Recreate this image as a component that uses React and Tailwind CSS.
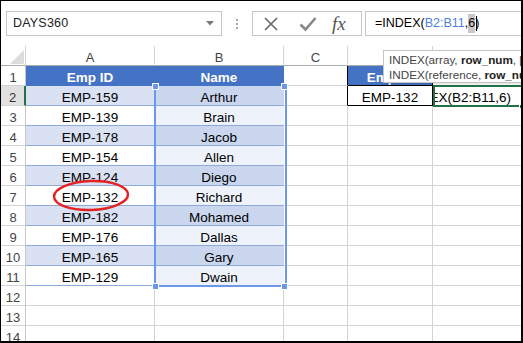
import React from "react";

const ids = ["EMP-159", "EMP-139", "EMP-178", "EMP-154", "EMP-124", "EMP-132", "EMP-182", "EMP-176", "EMP-165", "EMP-129"];
const names = ["Arthur", "Brain", "Jacob", "Allen", "Diego", "Richard", "Mohamed", "Dallas", "Gary", "Dwain"];

const base =
  "h-5 border-r border-b flex items-start justify-center whitespace-nowrap overflow-hidden leading-[23px]";

// per-row cell classes for columns A..E
const rowCells = (r) => {
  const even = r % 2 === 0;
  const data = r >= 2 && r <= 11;
  let a, b;
  if (r === 1) {
    a = "bg-[#4472c4] border-[#4472c4] text-white font-bold";
    b = "bg-[#4472c4] border-[#4472c4] text-white font-bold";
  } else if (data) {
    a = even ? "bg-[#d9e1f2] border-b-[#8ea9db] border-r-[#d9e1f2]" : "bg-white border-b-[#8ea9db] border-r-white";
    b = even ? "bg-[#cad6ee] border-b-[#8ea9db] border-r-[#cad6ee]" : "bg-[#edf2fb] border-b-[#8ea9db] border-r-[#edf2fb]";
  } else {
    a = "bg-white border-[#d4d4d4]";
    b = "bg-white border-[#d4d4d4]";
  }
  const c = r <= 2 ? "bg-white border-r-black border-b-[#d4d4d4]" : "bg-white border-[#d4d4d4]";
  let d = "bg-white border-[#d4d4d4]";
  let e = "bg-white border-[#d4d4d4]";
  if (r === 1) {
    d = "bg-[#4472c4] border-black text-white font-bold";
    e = "bg-white border-r-[#d4d4d4] border-b-black";
  }
  if (r === 2) {
    d = "bg-white border-black";
    e = "bg-white border-black justify-end pr-[10px]";
  }
  return [a, b, c, d, e];
};

const rowText = (r) => {
  if (r === 1) return ["Emp ID", "Name", "", "Emp ID", ""];
  if (r === 2) return [ids[0], names[0], "", "EMP-132", "=INDEX(B2:B11,6)"];
  if (r <= 11) return [ids[r - 2], names[r - 2], "", "", ""];
  return ["", "", "", "", ""];
};

function Handle({ className }) {
  return <div className={`absolute w-[7px] h-[7px] bg-[#6b98ec] border border-white ${className}`} />;
}

export default function App() {
  const rows = Array.from({ length: 14 }, (_, i) => i + 1);

  return (
    <div className="w-[523px] h-[343px] overflow-hidden bg-white border-t border-l border-r-2 border-b-2 border-black font-['Liberation_Sans',Arial,sans-serif] text-black">
      {/* toolbar */}
      <div className="h-[45px] flex items-start pl-[5px] pt-[10px]">
        <div className="w-[216px] h-[25px] border border-[#c6c6c6] flex items-center justify-between pl-[6px] pr-[7px]">
          <span className="text-[12.5px] text-[#222] tracking-[0.2px]">DAYS360</span>
          <svg width="8" height="5" viewBox="0 0 8 5">
            <path d="M0 0 L8 0 L4 4.5 Z" fill="#7a7a7a" />
          </svg>
        </div>
        <div className="w-[30px] h-[25px] flex flex-col items-center justify-center gap-[2px]">
          <div className="w-[2px] h-[2px] bg-[#a8a8a8]" />
          <div className="w-[2px] h-[2px] bg-[#a8a8a8]" />
          <div className="w-[2px] h-[2px] bg-[#a8a8a8]" />
        </div>
        <div className="w-[110px] h-[25px] border border-[#c6c6c6] flex items-center pl-[10px]">
          <svg width="16" height="16" viewBox="0 0 16 16">
            <path d="M2 2 L14 14 M14 2 L2 14" stroke="#666" strokeWidth="1.6" />
          </svg>
          <svg width="18" height="16" viewBox="0 0 18 16" className="ml-[20px]">
            <path d="M1.5 8.5 L6.5 13.5 L16.5 2" stroke="#888" strokeWidth="2.6" fill="none" />
          </svg>
          <span className="ml-[15px] font-['Liberation_Serif',serif] italic text-[19px] text-[#555] leading-none">
            fx
          </span>
        </div>
        <div className="ml-[3px] flex-1 h-[25px] border-y border-l border-[#c6c6c6] flex items-center pl-[9px] text-[12.5px] whitespace-nowrap">
          <span>=INDEX(</span>
          <span className="text-[#4f7fe0]">B2:B11</span>
          <span>,</span>
          <span className="bg-[#c8c8c8]">6</span>
          <span>)</span>
          <span className="w-px h-[15px] bg-black -ml-[3px]" />
        </div>
      </div>

      {/* grid */}
      <div className="relative">
        <div className="grid grid-cols-[25px_129px_129px_64px_85px_89px] text-[13.5px]">
          {/* column headers */}
          <div className="h-5 border-r border-b border-r-[#d4d4d4] border-b-[#ababab] relative">
            <svg width="14" height="14" viewBox="0 0 14 14" className="absolute left-[9px] top-[4px]">
              <path d="M14 0 L14 14 L0 14 Z" fill="#dcdcdc" />
            </svg>
          </div>
          {["A", "B", "C", "D", "E"].map((l) => (
            <div key={l} className={`${base} border-r-[#d4d4d4] border-b-[#ababab] text-[13px] text-[#444]`}>
              {l}
            </div>
          ))}

          {rows.map((r) => {
            const cls = rowCells(r);
            const txt = rowText(r);
            return (
              <React.Fragment key={r}>
                <div
                  className={
                    r === 2
                      ? `${base} bg-[#e1e1e1] border-b-[#d4d4d4] border-r-2 border-r-[#217346] text-[13px] text-[#333]`
                      : `${base} bg-white border-b-[#d4d4d4] border-r-[#c6c6c6] text-[13px] text-[#444]`
                  }
                >
                  {r}
                </div>
                {cls.map((c, i) => (
                  <div key={i} className={`${base} ${c}`}>
                    {txt[i]}
                  </div>
                ))}
              </React.Fragment>
            );
          })}
        </div>

        {/* B2:B11 reference range */}
        <div className="absolute left-[153px] top-[40px] w-[133px] h-[201px] border-2 border-t-0 border-[#6b98ec]" />
        <Handle className="left-[151px] top-[37px]" />
        <Handle className="left-[280px] top-[37px]" />
        <Handle className="left-[151px] top-[237px]" />
        <Handle className="left-[280px] top-[237px]" />

        {/* red mark around EMP-132 */}
        <svg width="84" height="40" viewBox="0 0 84 40" className="absolute left-[49px] top-[130px]">
          <ellipse cx="41" cy="19.5" rx="37" ry="14.5" fill="none" stroke="#e32222" strokeWidth="2.5" transform="rotate(-2 41 19.5)" />
        </svg>

        {/* active cell E2 */}
        <div className="absolute left-[432px] top-[39px] w-[91px] h-[22px] border-2 border-[#217346]" />
        <div className="absolute left-[518px] top-[58px] w-[5px] h-[5px] bg-[#217346] border border-white" />

        {/* function tooltip */}
        <div className="absolute left-[382px] top-[4px] w-[170px] h-[33px] bg-white border border-[#c6c6c6] shadow-[1px_1px_2px_rgba(0,0,0,0.15)] pl-[5px] pt-[1px] text-[11.7px] leading-[15px] text-[#444] whitespace-nowrap">
          <div>
            INDEX(array, <b className="text-[#222]">row_num</b>, [column_num])
          </div>
          <div>
            INDEX(reference, <b className="text-[#222]">row_num</b>, [column_num])
          </div>
        </div>
      </div>
    </div>
  );
}
